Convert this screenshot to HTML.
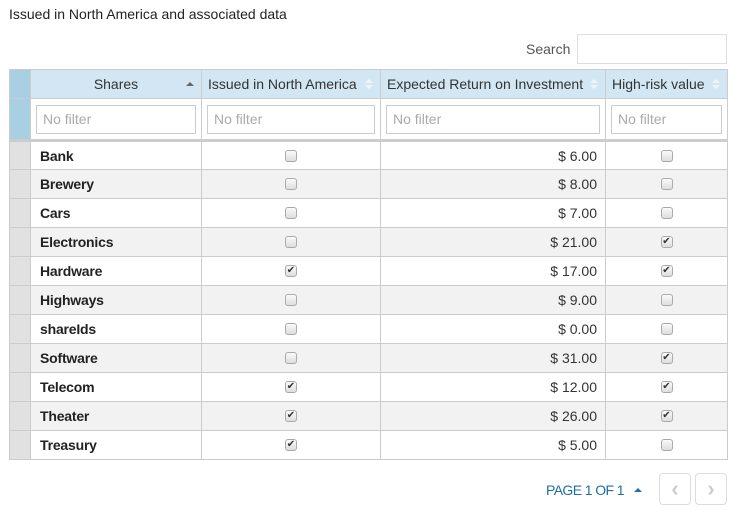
<!DOCTYPE html>
<html><head><style>
*{box-sizing:border-box;margin:0;padding:0}
body{width:738px;height:515px;background:#fff;font-family:"Liberation Sans",sans-serif;font-size:14px;color:#333;position:relative;overflow:hidden}
.title{position:absolute;left:9px;top:6px;font-size:14px;color:#222}
.search{position:absolute;left:526px;top:41px;font-size:14px;color:#555}
.sbox{position:absolute;left:577px;top:34px;width:150px;height:30px;border:1px solid #ddd}
table{position:absolute;left:9px;top:69px;border-collapse:collapse;table-layout:fixed;width:718px}
td,th{border:1px solid #ccc;height:29px;padding:0 8px}
th{background:#d2e7f3;font-weight:normal;color:#333;height:29px;position:relative}
th .s{position:absolute;right:7px;top:9px;width:0;height:0;border-left:4px solid transparent;border-right:4px solid transparent}
.up{border-bottom:4px solid #eef5fa}.dn{border-top:4px solid #eef5fa}
tr.f td{height:42px;padding:0 5px;border-bottom:3px solid #ccc}
tr.f td.ind,tr.h th.ind{background:#a9cfe2}
.fi{border:1px solid #ccc;height:29px;color:#aaa;padding:0 6px;line-height:27px;font-size:14px}
td.ind{background:#ddd}
tr.a td{background:#f2f2f2}
tr.a td.ind,tr.b td.ind{background:#e1e1e1}
td.n{font-weight:bold;color:#222;padding-left:9px;letter-spacing:-0.2px}
td.c{text-align:center}
td.r{text-align:right}
.cb{display:inline-block;width:12px;height:12px;border:1px solid #aaa;border-radius:3px;background:linear-gradient(#fafafa,#ddd);vertical-align:middle;position:relative;top:-1px;font-size:10px;line-height:10px;text-align:center;color:#333}
.pg{position:absolute;left:546px;top:482px;color:#1e6ea8;font-size:14px;letter-spacing:-0.6px}
.pg i{display:inline-block;width:0;height:0;border-left:4px solid transparent;border-right:4px solid transparent;border-bottom:4px solid #1e6ea8;margin-left:10px;vertical-align:3px}
.btn{position:absolute;top:473px;width:32px;height:32px;border:1px solid #ddd;border-radius:4px;color:#ccc;font-size:22px;font-weight:bold;text-align:center;line-height:29px}
</style></head><body>
<div class="title">Issued in North America and associated data</div>
<div class="search">Search</div><div class="sbox"></div>
<table>
<colgroup><col style="width:21px"><col style="width:171px"><col style="width:179px"><col style="width:225px"><col style="width:122px"></colgroup>
<tr class="h"><th class="ind"></th><th>Shares<span class="s" style="border-bottom:4px solid #666;top:12px"></span></th><th style="text-align:left;padding-left:6px">Issued in North America<span class="s up" style="top:9px"></span><span class="s dn" style="top:15px"></span></th><th style="text-align:left;padding-left:6px">Expected Return on Investment<span class="s up" style="top:9px"></span><span class="s dn" style="top:15px"></span></th><th style="text-align:left;padding-left:6px">High-risk value<span class="s up" style="top:9px"></span><span class="s dn" style="top:15px"></span></th></tr>
<tr class="f"><td class="ind"></td><td><div class="fi">No filter</div></td><td><div class="fi">No filter</div></td><td><div class="fi">No filter</div></td><td><div class="fi">No filter</div></td></tr>
<tr class="b"><td class="ind"></td><td class="n">Bank</td><td class="c"><span class="cb"></span></td><td class="r">$ 6.00</td><td class="c"><span class="cb"></span></td></tr>
<tr class="a"><td class="ind"></td><td class="n">Brewery</td><td class="c"><span class="cb"></span></td><td class="r">$ 8.00</td><td class="c"><span class="cb"></span></td></tr>
<tr class="b"><td class="ind"></td><td class="n">Cars</td><td class="c"><span class="cb"></span></td><td class="r">$ 7.00</td><td class="c"><span class="cb"></span></td></tr>
<tr class="a"><td class="ind"></td><td class="n">Electronics</td><td class="c"><span class="cb"></span></td><td class="r">$ 21.00</td><td class="c"><span class="cb">✔</span></td></tr>
<tr class="b"><td class="ind"></td><td class="n">Hardware</td><td class="c"><span class="cb">✔</span></td><td class="r">$ 17.00</td><td class="c"><span class="cb">✔</span></td></tr>
<tr class="a"><td class="ind"></td><td class="n">Highways</td><td class="c"><span class="cb"></span></td><td class="r">$ 9.00</td><td class="c"><span class="cb"></span></td></tr>
<tr class="b"><td class="ind"></td><td class="n">shareIds</td><td class="c"><span class="cb"></span></td><td class="r">$ 0.00</td><td class="c"><span class="cb"></span></td></tr>
<tr class="a"><td class="ind"></td><td class="n">Software</td><td class="c"><span class="cb"></span></td><td class="r">$ 31.00</td><td class="c"><span class="cb">✔</span></td></tr>
<tr class="b"><td class="ind"></td><td class="n">Telecom</td><td class="c"><span class="cb">✔</span></td><td class="r">$ 12.00</td><td class="c"><span class="cb">✔</span></td></tr>
<tr class="a"><td class="ind"></td><td class="n">Theater</td><td class="c"><span class="cb">✔</span></td><td class="r">$ 26.00</td><td class="c"><span class="cb">✔</span></td></tr>
<tr class="b"><td class="ind"></td><td class="n">Treasury</td><td class="c"><span class="cb">✔</span></td><td class="r">$ 5.00</td><td class="c"><span class="cb"></span></td></tr>
</table>
<div class="pg">PAGE 1 OF 1<i></i></div>
<div class="btn" style="left:659px">‹</div>
<div class="btn" style="left:695px">›</div>
</body></html>
